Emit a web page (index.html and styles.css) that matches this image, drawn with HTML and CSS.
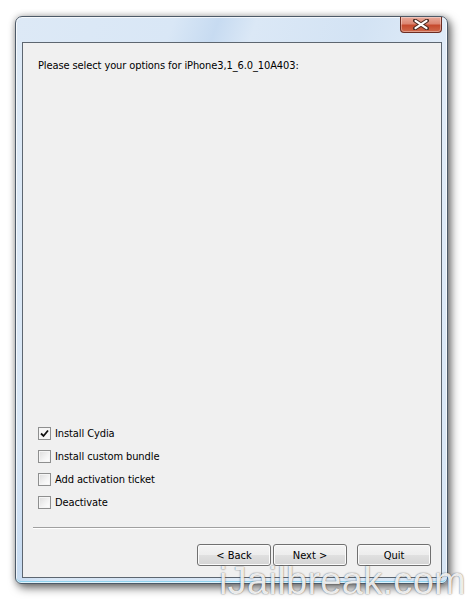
FILE: index.html
```html
<!DOCTYPE html>
<html>
<head>
<meta charset="utf-8">
<link rel="stylesheet" href="styles.css">
</head>
<body>
<div class="window">
  <div class="titlebar">
    <div class="close">
      <svg width="16" height="11" viewBox="0 0 16 11"><path d="M2 1.5 L14 9.5 M14 1.5 L2 9.5" stroke="#4a2a22" stroke-width="4" stroke-linecap="round"/><path d="M2.5 1.8 L13.5 9.2 M13.5 1.8 L2.5 9.2" stroke="#ffffff" stroke-width="2.2" stroke-linecap="round"/></svg>
    </div>
  </div>
  <div class="client">
    <div class="prompt">Please select your options for iPhone3,1_6.0_10A403:</div>
    <div class="spacer"></div>
    <div class="options">
      <label class="opt"><span class="box checked"><svg width="9" height="9" viewBox="0 0 9 9"><path d="M1 4.5 L3.5 7 L8 1.5" fill="none" stroke="#111" stroke-width="1.8"/></svg></span>Install Cydia</label>
      <label class="opt"><span class="box"></span>Install custom bundle</label>
      <label class="opt"><span class="box"></span>Add activation ticket</label>
      <label class="opt"><span class="box"></span>Deactivate</label>
    </div>
    <div class="sep"></div>
    <div class="buttons">
      <div class="pair">
        <div class="btn">&lt; Back</div>
        <div class="btn">Next &gt;</div>
      </div>
      <div class="btn">Quit</div>
    </div>
  </div>
</div>
<div class="watermark">iJailbreak.com</div>
</body>
</html>
```
FILE: styles.css
```css
html, body {
  margin: 0;
  padding: 0;
  background: #ffffff;
  width: 466px;
  height: 602px;
  overflow: hidden;
  font-family: "DejaVu Sans Condensed", "DejaVu Sans", Tahoma, sans-serif;
  font-size: 11px;
  color: #000;
}
body {
  padding: 16px 0 0 15px;
  box-sizing: border-box;
  position: relative;
}
.window {
  width: 433px;
  height: 568px;
  box-sizing: border-box;
  border: 1px solid #4d5a68;
  border-radius: 7px 7px 6px 6px;
  background: linear-gradient(110deg, #dde9f6 0%, #d9e7f6 25%, #c7dbf1 32%, #dbe8f6 38%, #d3e3f4 55%, #e1ecf8 70%, #d6e5f5 100%);
  box-shadow: 3px 4px 10px rgba(0,0,0,0.55), 0 0 6px rgba(0,0,0,0.25), inset 0 0 0 1px rgba(255,255,255,0.7), inset 0 -2px 0 #8fd2ee;
  display: flex;
  flex-direction: column;
  padding: 0 5px 5px 6px;
}
.titlebar {
  height: 25px;
  display: flex;
  justify-content: flex-end;
  align-items: flex-start;
}
.close {
  width: 42px;
  height: 16px;
  box-sizing: border-box;
  border: 1px solid #6b2c22;
  border-top: none;
  border-radius: 0 0 4px 4px;
  background: linear-gradient(#e9aa9a 0%, #dc8672 45%, #c64a2e 55%, #cf6a4c 100%);
  box-shadow: inset 0 0 0 1px rgba(255,255,255,0.35);
  display: flex;
  align-items: center;
  justify-content: center;
}
.close svg { display: block; }
.client {
  flex: 1;
  border: 1px solid #5d6670;
  background: #f0f0f0;
  display: flex;
  flex-direction: column;
  padding: 16px 11px 11px 10px;
}
.prompt {
  padding-left: 5px;
  line-height: 13px;
  letter-spacing: -0.1px;
}
.spacer { flex: 1; }
.options {
  display: flex;
  flex-direction: column;
  padding-left: 5px;
  margin-bottom: 13px;
  letter-spacing: -0.1px;
}
.opt {
  height: 23px;
  display: flex;
  align-items: center;
  gap: 4px;
}
.box {
  width: 13px;
  height: 13px;
  box-sizing: border-box;
  border: 1px solid #8e8f8f;
  background: linear-gradient(135deg, #dcdcdc 0%, #f4f4f4 60%, #ffffff 100%);
  box-shadow: inset 0 0 0 1px #f5f5f5;
  display: flex;
  align-items: center;
  justify-content: center;
}
.box.checked { background: #f6f6f6; }
.box svg { display: block; }
.sep {
  height: 1px;
  background: #a0a0a0;
  border-bottom: 1px solid #ffffff;
  margin-bottom: 15px;
}
.buttons {
  display: flex;
  justify-content: flex-end;
  gap: 10px;
  margin-right: -1px;
}
.pair {
  display: flex;
  gap: 2px;
}
.btn {
  width: 74px;
  height: 22px;
  box-sizing: border-box;
  border: 1px solid #707070;
  border-radius: 3px;
  background: linear-gradient(#f4f4f4 0%, #ededed 50%, #e0e0e0 51%, #d4d4d4 100%);
  box-shadow: inset 0 0 0 1px #fbfbfb;
  display: flex;
  align-items: center;
  justify-content: center;
}
.watermark {
  position: absolute;
  left: 219px;
  top: 562px;
  font-family: "Liberation Sans", Arial, sans-serif;
  font-size: 38px;
  line-height: 38px;
  letter-spacing: 0.3px;
  color: rgba(255,255,255,0.88);
  text-shadow: 0 0 1px rgba(0,0,0,0.45), 0 0 2px rgba(0,0,0,0.3);
  white-space: nowrap;
}
```
